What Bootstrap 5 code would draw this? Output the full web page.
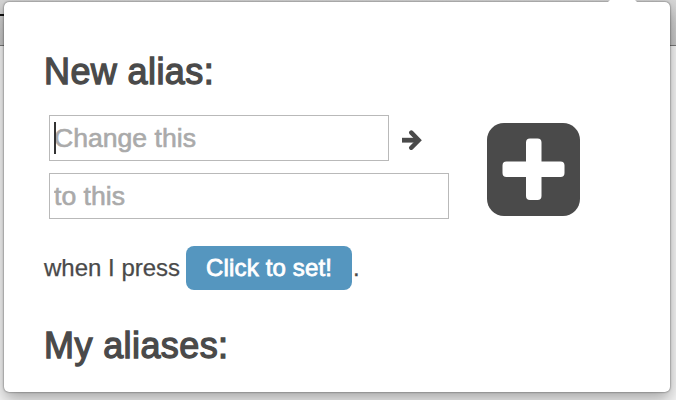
<!DOCTYPE html>
<html lang="en">
<head>
<meta charset="utf-8">
<meta name="viewport" content="width=device-width, initial-scale=1">
<title>Aliases</title>
<link rel="stylesheet" href="https://cdn.jsdelivr.net/npm/bootstrap@5.3.0/dist/css/bootstrap.min.css">
<style>
html,body{height:100%}
body{font-family:"Liberation Sans",Arial,sans-serif;color:#4a4a4a;padding:2px 6px 8px 4px;
background:linear-gradient(#d6d6d6 0,#c4c4c4 45px,#777 45px,#777 46px,#f4f4f4 46px)}
.popup{height:390px;border-radius:5px;padding:48px 40px 0;box-shadow:0 0 2px rgba(0,0,0,.65),0 7px 16px rgba(0,0,0,.32)}
.pointer{left:602px;top:-2px;width:33px;height:4px;background:#fff;clip-path:polygon(4px 0,29px 0,33px 100%,0 100%)}
.page-glyph{left:0;top:14px;width:4px;height:2px;background:#111}
.title{font-size:36px;line-height:44px;font-weight:400;letter-spacing:.4px;-webkit-text-stroke:1.3px #4a4a4a}
.title-list{margin-top:34px}
.fields{margin:21px 0 0 5px;width:400px;row-gap:12px}
.field{height:46px;border:1px solid #b9b9b9;border-radius:0;padding:0 4px;font-size:26.6px;line-height:44px;background:#fff}
.field::placeholder{color:#aaa;opacity:1;-webkit-text-stroke:.6px #aaa}
.from{width:340px}
.caret{left:5px;top:7px;width:1.5px;height:32px;background:#333}
.arrow{margin-left:12px}
.add{margin:29px 0 0 38px}
.trigger{font-size:24px;line-height:44px;margin-top:27px;-webkit-text-stroke:.25px #4a4a4a}
.set-key{width:166px;height:44px;background:#5596bf;border:0;border-radius:8px;font-size:24px;line-height:44px;margin:0 1px 0 6px;letter-spacing:.15px;-webkit-text-stroke:.8px #fff}
</style>
</head>
<body class="overflow-hidden">
<span class="page-glyph position-absolute"></span>
<main class="popup bg-white position-relative">
  <span class="pointer position-absolute"></span>
  <h2 class="title m-0">New alias:</h2>
  <div class="d-flex align-items-start">
    <div class="fields d-grid flex-shrink-0">
      <div class="d-flex align-items-center">
        <div class="position-relative">
          <input class="field from form-control" placeholder="Change this" aria-label="Change this">
          <span class="caret position-absolute"></span>
        </div>
        <svg class="arrow" width="22" height="24" viewBox="0 0 22 24" fill="none" stroke="#4a4a4a"><path d="M1 14.200H16" stroke-width="4.800"/><path d="M10.300 6.600 17.700 14.200l-7.400 7.600" stroke-width="4.500" stroke-linecap="round"/></svg>
      </div>
      <input class="field form-control" placeholder="to this" aria-label="to this">
    </div>
    <button class="add btn p-0 border-0 lh-1" aria-label="Add alias">
      <svg class="d-block" width="93" height="93" viewBox="0 0 93 93"><rect width="93" height="93" rx="17" fill="#4a4a4a"/><path fill="#fff" d="M43 15.5h7.500a4 4 0 0 1 4 4v19h19a4 4 0 0 1 4 4v7.500a4 4 0 0 1-4 4h-19v19a4 4 0 0 1-4 4H43a4 4 0 0 1-4-4V54H19.500a4 4 0 0 1-4-4v-7.500a4 4 0 0 1 4-4H39v-19a4 4 0 0 1 4-4z"/></svg>
    </button>
  </div>
  <div class="trigger d-flex align-items-center">when I press<button class="set-key btn btn-primary p-0">Click to set!</button>.</div>
  <h2 class="title title-list mb-0">My aliases:</h2>
</main>
<script src="https://cdn.jsdelivr.net/npm/bootstrap@5.3.0/dist/js/bootstrap.bundle.min.js"></script>
</body>
</html>
